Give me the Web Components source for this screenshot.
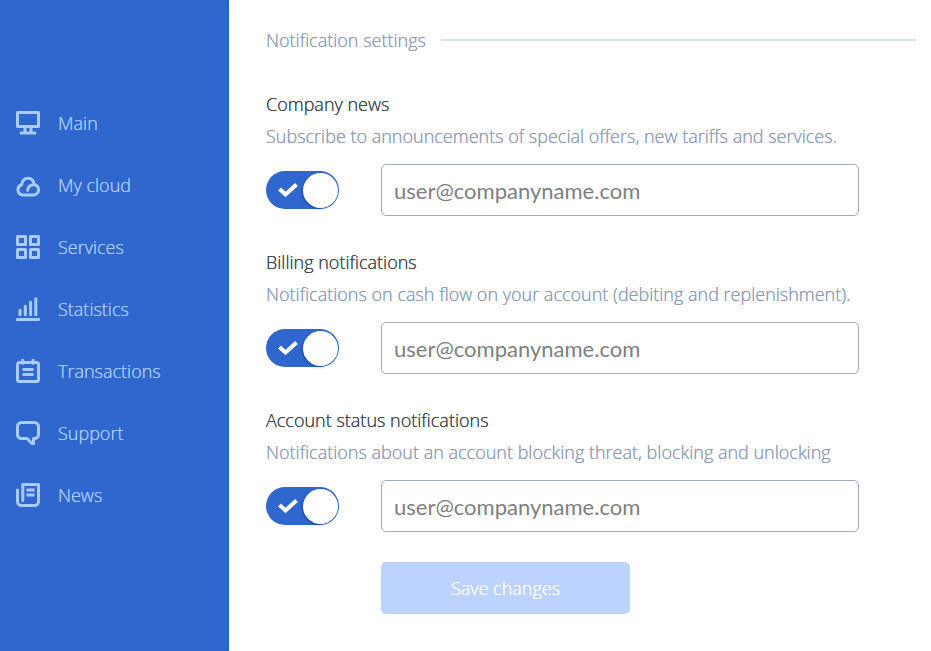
<!DOCTYPE html>
<html lang="en">
<head>
<meta charset="utf-8">
<meta name="viewport" content="width=device-width, initial-scale=1">
<title>Notification settings</title>
<style>
  :root { --blue: #2f67cf; --pale: #a9cbff; --muted: #919eb8; --ink: #404852; }
  /* The zero-offset shadow firms up the light weight's thin strokes. */
  body { margin: 0; font: 300 18px/32px "Open Sans", "Noto Sans", sans-serif; text-shadow: 0 0 currentColor; color: var(--ink); background: #fff; }
</style>
</head>
<body>
<app-shell>
  <side-nav slot="nav">
    <nav-item icon="main">Main</nav-item>
    <nav-item icon="cloud">My cloud</nav-item>
    <nav-item icon="services">Services</nav-item>
    <nav-item icon="stats">Statistics</nav-item>
    <nav-item icon="transactions">Transactions</nav-item>
    <nav-item icon="support">Support</nav-item>
    <nav-item icon="news">News</nav-item>
  </side-nav>
  <settings-group heading="Notification settings">
    <notify-setting heading="Company news" email="user@companyname.com">Subscribe to announcements of special offers, new tariffs and services.</notify-setting>
    <notify-setting heading="Billing notifications" email="user@companyname.com">Notifications on cash flow on your account (debiting and replenishment).</notify-setting>
    <notify-setting heading="Account status notifications" email="user@companyname.com">Notifications about an account blocking threat, blocking and unlocking</notify-setting>
    <save-button slot="actions">Save changes</save-button>
  </settings-group>
</app-shell>
<script>
const define = (name, render) => customElements.define(name, class extends HTMLElement {
  constructor() { super(); this.attachShadow({ mode: 'open' }); }
  connectedCallback() { this.shadowRoot.innerHTML = render(this); }
});

const icons = {
  main: '<path d="M1.500 1.500h21v14h-21zM9 16v5M15 16v5M5 22h14"/>',
  cloud: '<path d="M6.500 22a5.300 5.300 0 0 1-.8-10.300C6 8 8.300 5.200 12 5.200s5.700 2.600 6.200 6.300A5.300 5.300 0 0 1 17.500 22zM18 11.700c-3.600-.2-6.300 2-6.300 5.600"/>',
  services: '<path d="M1.500 1.500h8v8h-8zM14.500 1.500h8v8h-8zM1.500 14.500h8v8h-8zM14.500 14.500h8v8h-8z"/>',
  stats: '<path d="M1.300 22.500h21.400M4 13.300v4.400M9.300 9.300v8.400M14.600 5.300v12.400M19.800 1.800v15.900"/>',
  transactions: '<path d="M3.500 3.500h17a2 2 0 0 1 2 2v15a2 2 0 0 1-2 2h-17a2 2 0 0 1-2-2v-15a2 2 0 0 1 2-2z"/><path d="M6.800 1.200v3M17 1.200v3"/><path stroke-linecap="butt" d="M6.500 10.500h11M6.500 15.500h11"/>',
  support: '<path d="M5.500 1.500h13a4 4 0 0 1 4 4v8a4 4 0 0 1-4 4h-1v5h-1.500l-5-5H5.500a4 4 0 0 1-4-4v-8a4 4 0 0 1 4-4z"/>',
  news: '<path d="M6.800 17.500v-16h15.700v17a4 4 0 0 1-4 4h-13a4 4 0 0 1-4-4V7"/><path stroke-linecap="butt" d="M10.500 7h8M10.500 12h8"/>'
};

define('app-shell', () => `
  <style>
    :host { display: grid; grid-template-columns: 229px minmax(0, 1fr); min-height: 100vh; }
    main { padding: 24px 15px 37px 37px; }
  </style>
  <slot name="nav"></slot>
  <main><slot></slot></main>`);

define('side-nav', () => `
  <style>
    :host { display: block; background: var(--blue); box-shadow: inset -3px 0 3px -2px #0002; }
    nav { display: flex; flex-direction: column; padding-top: 92px; }
  </style>
  <nav aria-label="Sections"><slot></slot></nav>`);

define('nav-item', el => `
  <style>
    :host { display: block; }
    a { display: flex; align-items: center; gap: 18px; height: 62px; padding-left: 16px; color: var(--pale); text-decoration: none; text-shadow: 0 0 currentColor; }
    svg { width: 24px; height: 24px; fill: none; stroke: currentColor; stroke-width: 3; stroke-linecap: round; stroke-linejoin: round; }
  </style>
  <a href="#${el.getAttribute('icon')}"><svg viewBox="0 0 24 24" aria-hidden="true">${icons[el.getAttribute('icon')]}</svg><span><slot></slot></span></a>`);

define('settings-group', el => `
  <style>
    :host { display: block; }
    h1 { display: flex; align-items: center; gap: 15px; margin: 0 0 32px; font: inherit; color: var(--muted); text-shadow: 0 0 currentColor; }
    h1::after { content: ""; flex: 1; height: 2px; background: #d6e2ed; }
    .body { display: flex; flex-direction: column; gap: 30px; max-width: 593px; }
    .actions { padding-left: 115px; }
  </style>
  <h1>${el.getAttribute('heading')}</h1>
  <div class="body"><slot></slot><div class="actions"><slot name="actions"></slot></div></div>`);

define('toggle-switch', el => `
  <style>
    :host { display: block; }
    label { display: grid; align-items: center; width: 73px; height: 38px; cursor: pointer; }
    input, svg { grid-area: 1 / 1; }
    input { appearance: none; display: flex; align-items: center; justify-content: flex-end; box-sizing: border-box; width: 100%; height: 38px; margin: 0; padding: 1px; border-radius: 19px; background: var(--blue); }
    input::before { content: ""; width: 35px; height: 35px; border-radius: 50%; background: #fff; box-shadow: -1px 1px 2px #0b2d7080; }
    input:not(:checked) { justify-content: flex-start; background: #b7c1d3; }
    svg { width: 20px; height: 14px; margin-left: 12px; fill: none; stroke: #fff; stroke-width: 4; pointer-events: none; }
    input:not(:checked) + svg { visibility: hidden; }
  </style>
  <label><input type="checkbox" role="switch" checked aria-label="${el.getAttribute('label')}"><svg viewBox="0 0 20 14" aria-hidden="true"><path d="M1.500 6l6 5.500L18.500 1.500"/></svg></label>`);

define('notify-setting', el => `
  <style>
    :host { display: block; }
    h2, p { margin: 0; font: inherit; }
    p { color: var(--muted); text-shadow: 0 0 currentColor; }
    .row { display: grid; grid-template-columns: 73px minmax(0, 1fr); align-items: center; column-gap: 42px; margin-top: 12px; }
    input { box-sizing: border-box; width: 100%; height: 52px; padding: 0 12px; border: 1px solid #a5abc0; border-radius: 5px; background: #fff; color: #7f7f7f; font: 22px Lato, "Open Sans", sans-serif; text-shadow: none; outline: 0; }
    input:focus { border-color: var(--blue); }
  </style>
  <h2>${el.getAttribute('heading')}</h2>
  <p><slot></slot></p>
  <div class="row">
    <toggle-switch label="${el.getAttribute('heading')}"></toggle-switch>
    <input type="email" value="${el.getAttribute('email')}" aria-label="${el.getAttribute('heading')} email">
  </div>`);

define('save-button', () => `
  <style>
    :host { display: block; }
    button { display: block; width: 249px; height: 52px; border: 0; border-radius: 5px; background: #bcd3ff; color: #fff; font: inherit; text-shadow: 0 0 currentColor; cursor: pointer; }
  </style>
  <button type="button"><slot></slot></button>`);
</script>
</body>
</html>
